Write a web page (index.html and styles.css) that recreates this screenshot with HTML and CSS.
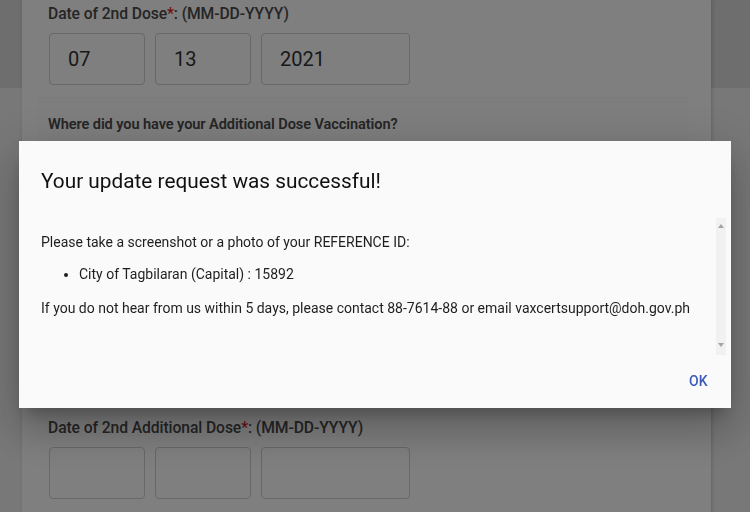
FILE: index.html
```html
<!DOCTYPE html>
<html lang="en">
<head>
<meta charset="utf-8">
<title>Vaxcert update</title>
<link rel="stylesheet" href="styles.css">
</head>
<body>
<div class="page">
  <div class="card">
    <div class="field">
      <div class="label">Date of 2nd Dose<span class="req">*</span>: (MM-DD-YYYY)</div>
      <div class="date-row">
        <div class="box box-sm">07</div>
        <div class="box box-sm">13</div>
        <div class="box box-lg">2021</div>
      </div>
    </div>
    <div class="section">
      <div class="label">Where did you have your Additional Dose Vaccination?</div>
    </div>
    <div class="field field-2">
      <div class="label">Date of 2nd Additional Dose<span class="req">*</span>: (MM-DD-YYYY)</div>
      <div class="date-row">
        <div class="box box-sm"></div>
        <div class="box box-sm"></div>
        <div class="box box-lg"></div>
      </div>
    </div>
  </div>
</div>

<div class="overlay"></div>

<div class="dialog" role="dialog">
  <h2 class="dialog-title">Your update request was successful!</h2>
  <div class="dialog-body">
    <div class="dialog-content">
      <p class="p1">Please take a screenshot or a photo of your REFERENCE ID:</p>
      <ul class="ref-list">
        <li>City of Tagbilaran (Capital) : 15892</li>
      </ul>
      <p class="p2">If you do not hear from us within 5 days, please contact 88-7614-88 or email vaxcertsupport@doh.gov.ph</p>
    </div>
    <div class="scrollbar">
      <span class="arrow arrow-up"></span>
      <span class="arrow arrow-down"></span>
    </div>
  </div>
  <div class="dialog-actions">
    <button class="ok-btn">OK</button>
  </div>
</div>
</body>
</html>
```

FILE: styles.css
```css
html, body {
  margin: 0;
  padding: 0;
  height: 100%;
  overflow: hidden;
}

body {
  font-family: Roboto, "Liberation Sans", Arial, sans-serif;
}

.page {
  min-height: 512px;
  background: linear-gradient(to bottom, #dcdcdc 0, #dcdcdc 88px, #f1f1f1 88px);
  padding-left: 22px;
}

.card {
  width: 689px;
  min-height: 520px;
  background: #fefefe;
  box-shadow: 1px 0 4px rgba(0, 0, 0, 0.18);
  padding-top: 4px;
  box-sizing: border-box;
}

.field {
  padding-left: 26px;
}

.label {
  font-size: 15.7px;
  line-height: 20px;
  font-weight: 500;
  color: #4a4a4a;
  letter-spacing: -0.1px;
}

.req {
  color: #e01b1b;
}

.date-row {
  display: flex;
  gap: 10px;
  margin-top: 9px;
  padding-left: 1px;
}

.box {
  height: 52px;
  box-sizing: border-box;
  border: 1px solid #d0d0d0;
  border-radius: 4px;
  background: #fff;
  font-size: 20px;
  color: #333;
  line-height: 51px;
  padding-left: 18px;
}

.box-sm {
  width: 96px;
}

.box-lg {
  width: 149px;
  padding-left: 18px;
}

.section {
  margin: 12px 23px 0 16px;
  padding: 16px 10px 0;
  background: #fcfcfc;
  border-top: 1px solid #f6f6f6;
  height: 295px;
  box-sizing: border-box;
}

.section .label {
  font-size: 14.6px;
  font-weight: 600;
}

.field-2 {
  margin-top: 26px;
}

.overlay {
  position: fixed;
  inset: 0;
  background: rgba(0, 0, 0, 0.5);
}

.dialog {
  position: fixed;
  left: 19px;
  top: 141px;
  width: 712px;
  height: 267px;
  background: #fafafa;
  box-sizing: border-box;
  display: flex;
  flex-direction: column;
  box-shadow: 0 11px 15px -7px rgba(0, 0, 0, 0.25), 0 24px 38px 3px rgba(0, 0, 0, 0.16), 0 9px 46px 8px rgba(0, 0, 0, 0.12);
}

.dialog-title {
  margin: 0;
  padding: 24px 22px 0;
  font-size: 20.8px;
  line-height: 32px;
  font-weight: 400;
  color: #111;
}

.dialog-body {
  display: flex;
  margin-top: 21px;
  height: 137px;
  padding-right: 5px;
}

.dialog-content {
  flex: 1;
  padding: 14px 0 0 22px;
  font-size: 14px;
  line-height: 20px;
  color: #1e1e1e;
}

.dialog-content p {
  margin: 0;
}

.ref-list {
  margin: 12px 0 0;
  padding-left: 38px;
}

.p2 {
  margin-top: 14px !important;
}

.scrollbar {
  width: 10px;
  background: #f1f1f1;
  display: flex;
  flex-direction: column;
  justify-content: space-between;
  align-items: center;
  padding: 6px 0 8px;
  box-sizing: border-box;
}

.arrow {
  width: 0;
  height: 0;
  border-left: 3px solid transparent;
  border-right: 3px solid transparent;
}

.arrow-up {
  border-bottom: 4px solid #a3a3a3;
}

.arrow-down {
  border-top: 4px solid #a3a3a3;
}

.dialog-actions {
  flex: 1;
  display: flex;
  justify-content: flex-end;
  align-items: center;
  padding: 0 15px 2px 0;
}

.ok-btn {
  font-family: Roboto, "Liberation Sans", Arial, sans-serif;
  font-size: 14px;
  font-weight: 500;
  color: #3a5bb8;
  background: none;
  border: none;
  padding: 0 8px;
  height: 36px;
  letter-spacing: 0.3px;
}
```
